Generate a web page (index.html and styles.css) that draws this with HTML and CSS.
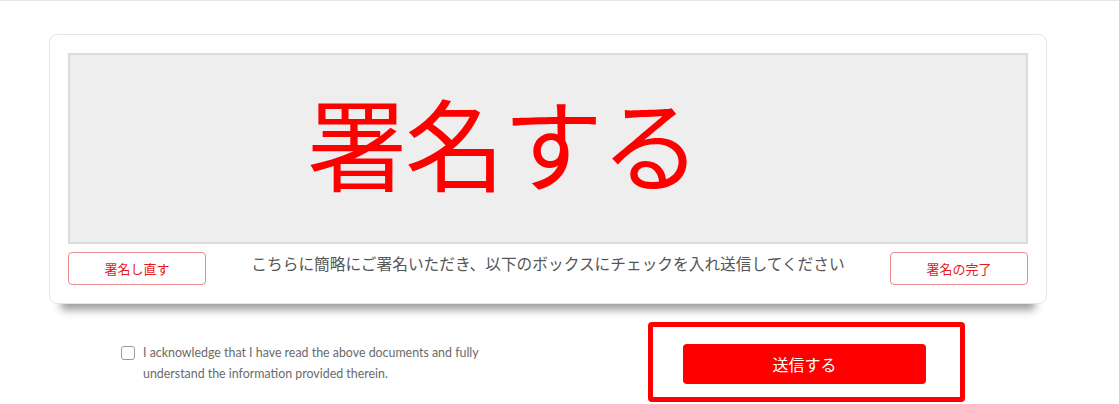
FILE: index.html
```html
<!DOCTYPE html>
<html lang="ja">
<head>
    <meta charset="UTF-8">
    <meta name="viewport" content="width=device-width, initial-scale=1.0">
    <title>署名</title>
    <link rel="stylesheet" href="styles.css">
</head>
<body>
    <div class="topline"></div>
    <div class="sign-card">
        <div class="sign-pad">
            <div class="sign-text">署名する</div>
        </div>
        <div class="sign-actions">
            <button class="outline-btn">署名し直す</button>
            <p class="hint">こちらに簡略にご署名いただき、以下のボックスにチェックを入れ送信してください</p>
            <button class="outline-btn">署名の完了</button>
        </div>
    </div>
    <div class="submit-row">
        <label class="agree">
            <span class="box"></span>
            <span class="agree-text">I acknowledge that I have read the above documents and fully<br>understand the information provided therein.</span>
        </label>
        <div class="highlight">
            <button class="send-btn">送信する</button>
        </div>
    </div>
</body>
</html>
```

FILE: styles.css
```css
body {
    margin: 0;
    background: #fff;
    font-family: "Noto Sans CJK JP", "Noto Sans", sans-serif;
}
.topline {
    height: 1px;
    background: #e6e6e6;
}
.sign-card {
    width: 960px;
    margin: 33px 0 0 49px;
    padding: 18px 18px 18px 18px;
    border: 1px solid #e6e6e6;
    border-radius: 8px;
    background: #fff;
    box-shadow: 0 18px 8px -12px rgba(0, 0, 0, 0.38);
}
.sign-pad {
    height: 187px;
    border: 2px solid #dcdcdc;
    background: #eeeeee;
}
.sign-text {
    padding: 36px 0 0 237px;
    font-size: 100px;
    letter-spacing: -2px;
    line-height: 1;
    color: #ff0000;
}
.sign-actions {
    display: flex;
    justify-content: space-between;
    align-items: flex-start;
    margin-top: 8px;
}
.outline-btn {
    width: 138px;
    height: 33px;
    border: 1px solid #e98b8b;
    border-radius: 4px;
    background: #fff;
    color: #e8191c;
    font-family: "Noto Sans CJK JP", sans-serif;
    font-size: 13px;
    padding: 0;
}
.hint {
    margin: 1px 0 0;
    font-size: 15.7px;
    line-height: 22px;
    color: #555;
}
.submit-row {
    display: flex;
    align-items: flex-start;
    margin-top: 18px;
}
.agree {
    display: flex;
    align-items: flex-start;
    gap: 8px;
    margin: 20px 0 0 121px;
    width: 460px;
}
.box {
    flex: none;
    width: 12px;
    height: 12px;
    margin-top: 4px;
    border: 1px solid #999;
    border-radius: 3px;
    background: #fff;
}
.agree-text {
    font-family: Lato, "Open Sans", sans-serif;
    font-size: 12.4px;
    line-height: 21px;
    color: #6a6a6a;
}
.highlight {
    margin-left: 67px;
    padding: 17px 34px 13px 30px;
    border: 5px solid #ff0000;
    border-radius: 4px;
}
.send-btn {
    display: block;
    width: 243px;
    height: 40px;
    border: none;
    border-radius: 4px;
    background: #ff0000;
    color: #fff;
    font-family: "Noto Sans CJK JP", sans-serif;
    font-size: 16px;
}
```
